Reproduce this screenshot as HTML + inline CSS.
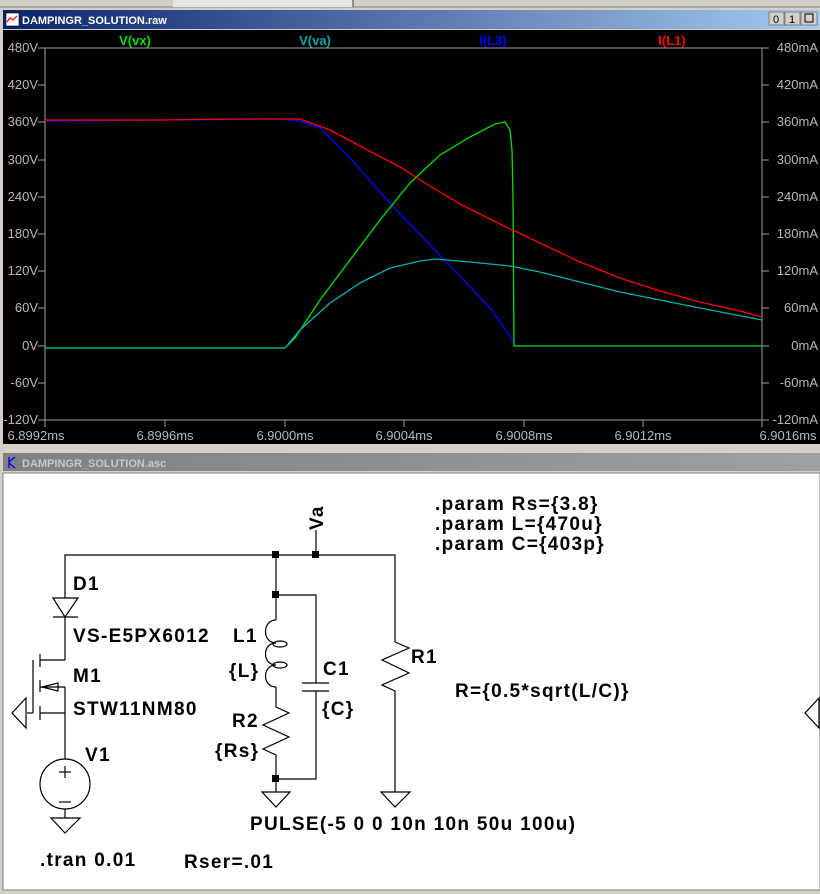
<!DOCTYPE html>
<html><head><meta charset="utf-8"><style>
html,body{margin:0;padding:0;width:820px;height:894px;overflow:hidden;background:#d4d0c8;font-family:"Liberation Sans",sans-serif}
svg{display:block}
</style></head><body>
<svg width="820" height="894" xmlns="http://www.w3.org/2000/svg" font-family="Liberation Sans, sans-serif">
<defs>
<linearGradient id="tb1" x1="0" x2="1"><stop offset="0" stop-color="#0a246a"/><stop offset="1" stop-color="#a6caf0"/></linearGradient>
<linearGradient id="tb2" x1="0" x2="1"><stop offset="0" stop-color="#808080"/><stop offset="1" stop-color="#a0a0a0"/></linearGradient>
</defs>
<rect x="0" y="0" width="820" height="894" fill="#d4d0c8"/>
<line x1="0" y1="7" x2="820" y2="7" stroke="#808080"/>
<rect x="173" y="0" width="180" height="7" fill="#e8e6e0"/>
<line x1="353" y1="0" x2="353" y2="7" stroke="#404040"/>
<rect x="2" y="9" width="818" height="436" fill="#d4d0c8"/>
<rect x="3" y="10" width="817" height="19" fill="url(#tb1)"/>
<rect x="6" y="13" width="13" height="13" fill="#fff" stroke="#000" stroke-width="0.6"/>
<polyline points="7,22 10,18 13,20 17,16" fill="none" stroke="#e00" stroke-width="1.2"/>
<text x="22" y="24" font-size="11" font-weight="bold" fill="#fff">DAMPINGR_SOLUTION.raw</text>
<rect x="769" y="12" width="15" height="13" fill="#d4d0c8" stroke="#808080"/><text x="773" y="23" font-size="11" fill="#000">0</text>
<rect x="785" y="12" width="15" height="13" fill="#d4d0c8" stroke="#808080"/><text x="789" y="23" font-size="11" fill="#000">1</text>
<rect x="801" y="12" width="16" height="13" fill="#d4d0c8" stroke="#808080"/><rect x="805" y="14" width="8" height="8" fill="none" stroke="#000"/>
<rect x="3" y="30" width="817" height="414" fill="#000"/>
<text x="135" y="45" font-size="13" font-weight="bold" fill="#00e000" text-anchor="middle">V(vx)</text>
<text x="315" y="45" font-size="13" font-weight="bold" fill="#00a8a8" text-anchor="middle">V(va)</text>
<text x="493" y="45" font-size="13" font-weight="bold" fill="#0000ff" text-anchor="middle">I(L3)</text>
<text x="672" y="45" font-size="13" font-weight="bold" fill="#ff0000" text-anchor="middle">I(L1)</text>
<g stroke="#a0a0a0" stroke-width="1" fill="none">
<polyline points="45,48 45,420 762,420 762,48 45,48"/>
</g>
<g stroke="#a0a0a0">
<line x1="38" y1="48" x2="45" y2="48"/><line x1="38" y1="85" x2="45" y2="85"/><line x1="38" y1="122" x2="45" y2="122"/><line x1="38" y1="160" x2="45" y2="160"/><line x1="38" y1="197" x2="45" y2="197"/><line x1="38" y1="234" x2="45" y2="234"/><line x1="38" y1="271" x2="45" y2="271"/><line x1="38" y1="308" x2="45" y2="308"/><line x1="38" y1="346" x2="45" y2="346"/><line x1="38" y1="383" x2="45" y2="383"/><line x1="38" y1="420" x2="45" y2="420"/>
<line x1="762" y1="48" x2="769" y2="48"/><line x1="762" y1="85" x2="769" y2="85"/><line x1="762" y1="122" x2="769" y2="122"/><line x1="762" y1="160" x2="769" y2="160"/><line x1="762" y1="197" x2="769" y2="197"/><line x1="762" y1="234" x2="769" y2="234"/><line x1="762" y1="271" x2="769" y2="271"/><line x1="762" y1="308" x2="769" y2="308"/><line x1="762" y1="346" x2="769" y2="346"/><line x1="762" y1="383" x2="769" y2="383"/><line x1="762" y1="420" x2="769" y2="420"/>
<line x1="165" y1="420" x2="165" y2="427"/><line x1="285" y1="420" x2="285" y2="427"/><line x1="404" y1="420" x2="404" y2="427"/><line x1="524" y1="420" x2="524" y2="427"/><line x1="643" y1="420" x2="643" y2="427"/><line x1="45" y1="420" x2="45" y2="427"/><line x1="762" y1="420" x2="762" y2="427"/>
</g>
<g font-size="13" fill="#b8b8b8" text-anchor="end">
<text x="38" y="52">480V</text><text x="38" y="89">420V</text><text x="38" y="126">360V</text><text x="38" y="164">300V</text><text x="38" y="201">240V</text><text x="38" y="238">180V</text><text x="38" y="275">120V</text><text x="38" y="312">60V</text><text x="38" y="350">0V</text><text x="38" y="387">-60V</text><text x="38" y="424">-120V</text>
</g>
<g font-size="13" fill="#b8b8b8" text-anchor="end">
<text x="818" y="52">480mA</text><text x="818" y="89">420mA</text><text x="818" y="126">360mA</text><text x="818" y="164">300mA</text><text x="818" y="201">240mA</text><text x="818" y="238">180mA</text><text x="818" y="275">120mA</text><text x="818" y="312">60mA</text><text x="818" y="350">0mA</text><text x="818" y="387">-60mA</text><text x="818" y="424">-120mA</text>
</g>
<g font-size="13" fill="#b8b8b8" text-anchor="middle">
<text x="36" y="440">6.8992ms</text><text x="165" y="440">6.8996ms</text><text x="285" y="440">6.9000ms</text><text x="404" y="440">6.9004ms</text><text x="524" y="440">6.9008ms</text><text x="643" y="440">6.9012ms</text><text x="788" y="440">6.9016ms</text>
</g>
<g fill="none" stroke-width="1.3">
<polyline stroke="#0000ff" points="45,121 280,119 300,121 320,128 350,158 380,192 400,214 430,245 460,276 490,308 510,336 515,346 762,346"/>
<polyline stroke="#00e000" points="45,348 285,348 295,338 320,300 350,260 380,220 410,183 440,155 470,137 495,124 505,122 510,130 512,150 513,200 514,346 520,346 762,346"/>
<polyline stroke="#00b0b0" points="45,348 285,348 300,330 330,303 360,283 390,268 420,261 435,259 470,262 510,266 540,272 580,282 620,292 660,300 700,308 762,320"/>
<polyline stroke="#ff0000" points="45,120 160,120 240,119 300,119 330,130 360,146 400,167 430,186 460,204 500,224 540,243 580,262 620,278 660,291 700,302 740,311 762,317"/>
</g>
<rect x="2" y="450" width="818" height="444" fill="#d4d0c8"/>
<rect x="3" y="453" width="817" height="18" fill="url(#tb2)"/>
<g stroke="#0000ff" stroke-width="1.3" fill="none"><line x1="9" y1="457" x2="9" y2="468"/><line x1="9" y1="462" x2="15" y2="457"/><line x1="9" y1="463" x2="15" y2="468"/></g>
<text x="22" y="467" font-size="11" font-weight="bold" fill="#c8c8c8">DAMPINGR_SOLUTION.asc</text>
<rect x="3" y="473" width="817" height="417" fill="#fff" stroke="#808080"/>
<g stroke="#000" stroke-width="1.2" fill="none">
<polyline points="65,660 65,617"/><polyline points="65,598 65,555 395,555 395,642"/>
<polygon points="53,598 78,598 65,617"/><line x1="53" y1="617" x2="78" y2="617"/>
<line x1="40" y1="660" x2="65" y2="660"/>
<line x1="40" y1="654" x2="40" y2="667"/><line x1="40" y1="680" x2="40" y2="692"/><line x1="40" y1="706" x2="40" y2="720"/>
<line x1="33" y1="660" x2="33" y2="713"/><line x1="27" y1="713" x2="33" y2="713"/>
<polygon points="12,713 26,698 26,728"/>
<line x1="40" y1="687" x2="65" y2="687"/><polygon points="42,687 58,683 58,691"/>
<line x1="40" y1="713" x2="65" y2="713"/><polyline points="65,687 65,759"/>
<ellipse cx="65" cy="784" rx="25" ry="25"/>
<line x1="59" y1="772" x2="71" y2="772"/><line x1="65" y1="766" x2="65" y2="778"/><line x1="59" y1="802" x2="71" y2="802"/>
<line x1="65" y1="809" x2="65" y2="818"/><polygon points="51,818 80,818 65,833"/>
<line x1="316" y1="530" x2="316" y2="555"/>
<polyline points="276,555 276,620"/><polyline points="276,595 316,595 316,683"/>
<line x1="302" y1="683" x2="329" y2="683"/><line x1="302" y1="691" x2="329" y2="691"/>
<polyline points="316,691 316,779 276,779"/>
<path d="M276,620 C262,620 262,643 276,643 M276,643 C262,643 262,665 276,665 M276,665 C262,665 262,687 276,687"/>
<ellipse cx="280" cy="644" rx="7" ry="3"/><ellipse cx="280" cy="665" rx="7" ry="3"/>
<polyline points="276,687 276,707 289,713 263,725 289,737 263,749 276,755 276,792"/>
<polygon points="262,792 290,792 276,807"/>
<polyline points="395,642 409,648 382,660 409,673 382,685 395,691 395,792"/>
<polygon points="381,792 410,792 395,807"/>
<polygon points="819,698 805,713 819,728"/>
</g>
<g fill="#000"><rect x="272" y="551" width="7" height="7"/><rect x="312" y="551" width="7" height="7"/><rect x="272" y="591" width="7" height="7"/><rect x="272" y="775" width="7" height="7"/></g>
<g font-size="19" font-weight="bold" fill="#000" letter-spacing="1.3">
<text x="73" y="590">D1</text>
<text x="73" y="642">VS-E5PX6012</text>
<text x="73" y="682">M1</text>
<text x="73" y="715">STW11NM80</text>
<text x="85" y="761">V1</text>
<text x="233" y="642">L1</text>
<text x="229" y="677">{L}</text>
<text x="232" y="727">R2</text>
<text x="215" y="757">{Rs}</text>
<text x="323" y="675">C1</text>
<text x="322" y="715">{C}</text>
<text x="411" y="663">R1</text>
<text x="455" y="697">R={0.5*sqrt(L/C)}</text>
<text x="435" y="510">.param Rs={3.8}</text>
<text x="435" y="530">.param L={470u}</text>
<text x="435" y="550">.param C={403p}</text>
<text x="250" y="830">PULSE(-5 0 0 10n 10n 50u 100u)</text>
<text x="40" y="866">.tran 0.01</text>
<text x="184" y="868">Rser=.01</text>
<text transform="translate(323,530) rotate(-90)">Va</text>
</g>
</svg>
</body></html>
